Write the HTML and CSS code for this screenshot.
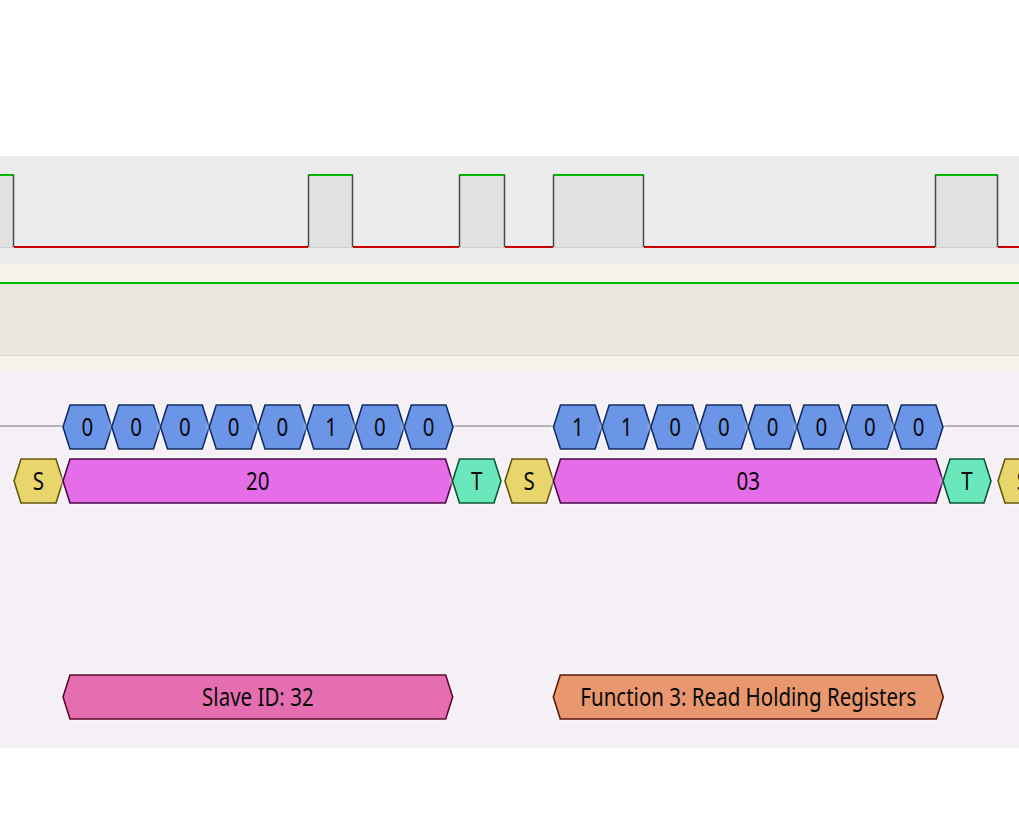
FILE: index.html
```html
<!DOCTYPE html>
<html lang="en">
<head>
    <meta charset="UTF-8">
    <meta name="viewport" content="width=device-width, initial-scale=1.0">
    <title>Modbus RTU decode</title>
    <link rel="stylesheet" href="styles.css">
</head>
<body>
    <div class="view">
        <div class="trace trace-a">
            <svg id="wave-a" width="1019" height="108" viewBox="0 0 1019 108"></svg>
        </div>
        <div class="trace trace-b">
            <svg width="1019" height="108" viewBox="0 0 1019 108">
                <rect class="high-fill-b" x="0" y="19" width="1019" height="72"></rect>
                <line class="low-mark-b" x1="0" y1="91.5" x2="1019" y2="91.5"></line>
                <line class="level-high" x1="0" y1="19" x2="1019" y2="19"></line>
            </svg>
        </div>
        <div class="decoder">
            <svg id="decoder" width="1019" height="376" viewBox="0 0 1019 376"></svg>
        </div>
    </div>

    <script>
        const NS = 'http://www.w3.org/2000/svg';
        const HIGH = 19;
        const LOW = 91;

        function el(tag, attrs, parent) {
            const node = document.createElementNS(NS, tag);
            for (const key in attrs) node.setAttribute(key, attrs[key]);
            parent.appendChild(node);
            return node;
        }

        // channel A: pulses as [rise, fall]
        const pulses = [[-4, 14], [308, 353], [459, 505], [553, 644], [935, 998]];
        const wave = document.getElementById('wave-a');

        pulses.forEach(([a, b]) => {
            el('rect', { x: a, y: HIGH, width: b - a, height: LOW - HIGH, class: 'high-fill' }, wave);
            el('line', { x1: a, y1: LOW + 0.5, x2: b, y2: LOW + 0.5, class: 'low-mark' }, wave);
        });

        pulses.forEach(([a, b], i) => {
            const next = pulses[i + 1] ? pulses[i + 1][0] : 1025;
            el('line', { x1: b, y1: LOW, x2: next, y2: LOW, class: 'level-low' }, wave);
            el('line', { x1: a, y1: HIGH, x2: b, y2: HIGH, class: 'level-high' }, wave);
            if (a > 0) el('line', { x1: a + 0.5, y1: HIGH, x2: a + 0.5, y2: LOW, class: 'edge' }, wave);
            el('line', { x1: b - 0.5, y1: HIGH, x2: b - 0.5, y2: LOW, class: 'edge' }, wave);
        });

        // decoder annotations
        const dec = document.getElementById('decoder');

        function hex(x1, x2, y, h, kind, label) {
            const inset = 7;
            const cy = y + h / 2;
            const pts = [
                [x1, cy], [x1 + inset, y], [x2 - inset, y],
                [x2, cy], [x2 - inset, y + h], [x1 + inset, y + h]
            ].map(p => p.join(',')).join(' ');
            el('polygon', { points: pts, class: 'ann ' + kind }, dec);
            const cx = (x1 + x2) / 2;
            const t = el('text', { class: 'ann-label', transform: `translate(${cx} ${cy + 9}) scale(0.82 1)` }, dec);
            t.textContent = label;
        }

        // idle lines behind the bit row
        [[0, 63], [452, 554], [942, 1019]].forEach(([a, b]) => {
            el('line', { x1: a, y1: 54, x2: b, y2: 54, class: 'idle' }, dec);
        });

        const bitGroups = [
            { start: 63, width: 48.75, bits: '00000100' },
            { start: 553.5, width: 48.68, bits: '11000000' }
        ];
        bitGroups.forEach(g => {
            [...g.bits].forEach((bit, i) => {
                const x = g.start + i * g.width;
                hex(x, x + g.width, 33, 44, 'bit', bit);
            });
        });

        const fields = [
            [14, 63, 'S', 'start'],
            [63, 452.5, '20', 'data'],
            [452.5, 501, 'T', 'stop'],
            [505, 553.5, 'S', 'start'],
            [553.5, 943, '03', 'data'],
            [943, 991, 'T', 'stop'],
            [998, 1047, 'S', 'start']
        ];
        fields.forEach(([a, b, label, kind]) => hex(a, b, 87, 44, kind, label));

        hex(63, 452.7, 303, 44, 'slave', 'Slave ID: 32');
        hex(553.3, 943.3, 303, 44, 'func', 'Function 3: Read Holding Registers');
    </script>
</body>
</html>
```

FILE: styles.css
```css
* {
    margin: 0;
    padding: 0;
    box-sizing: border-box;
}

body {
    background: #ffffff;
    font-family: 'Noto Sans', 'Open Sans', sans-serif;
    overflow: hidden;
}

.view {
    display: flex;
    flex-direction: column;
    padding-top: 156px;
}

.trace,
.decoder {
    overflow: hidden;
}

.trace svg,
.decoder svg {
    display: block;
}

/* Logic channels */
.trace {
    height: 108px;
}

.trace-a {
    background: #ececec;
}

.trace-b {
    background: #f6f2ec;
}

.high-fill {
    fill: #e1e1e1;
}

.high-fill-b {
    fill: #e9e6df;
}

.low-mark {
    stroke: #d0d0d0;
    stroke-width: 1;
}

.low-mark-b {
    stroke: #dcd8d0;
    stroke-width: 1;
}

.level-high {
    stroke: #00b800;
    stroke-width: 2;
}

.level-low {
    stroke: #c80000;
    stroke-width: 2;
}

.edge {
    stroke: #4a4a4a;
    stroke-width: 1.5;
}

/* Protocol decoder row */
.decoder {
    height: 376px;
    background: #f4f0f6;
}

.idle {
    stroke: #9c9c9c;
    stroke-width: 1.5;
}

.ann {
    stroke-width: 1.6;
    stroke-linejoin: miter;
    filter: drop-shadow(0 0 2px rgba(255, 255, 255, 0.9));
}

.ann.bit {
    fill: #6b96e8;
    stroke: #132c66;
}

.ann.data {
    fill: #e66de8;
    stroke: #4a0846;
}

.ann.start {
    fill: #e8d56c;
    stroke: #665510;
}

.ann.stop {
    fill: #6ae8bc;
    stroke: #0c5632;
}

.ann.slave {
    fill: #e56eb1;
    stroke: #5a0a2a;
}

.ann.func {
    fill: #e8976e;
    stroke: #5a1808;
}

.ann-label {
    font-family: 'Noto Sans', 'Open Sans', sans-serif;
    font-size: 25px;
    fill: #0a0a0a;
    text-anchor: middle;
}
```
